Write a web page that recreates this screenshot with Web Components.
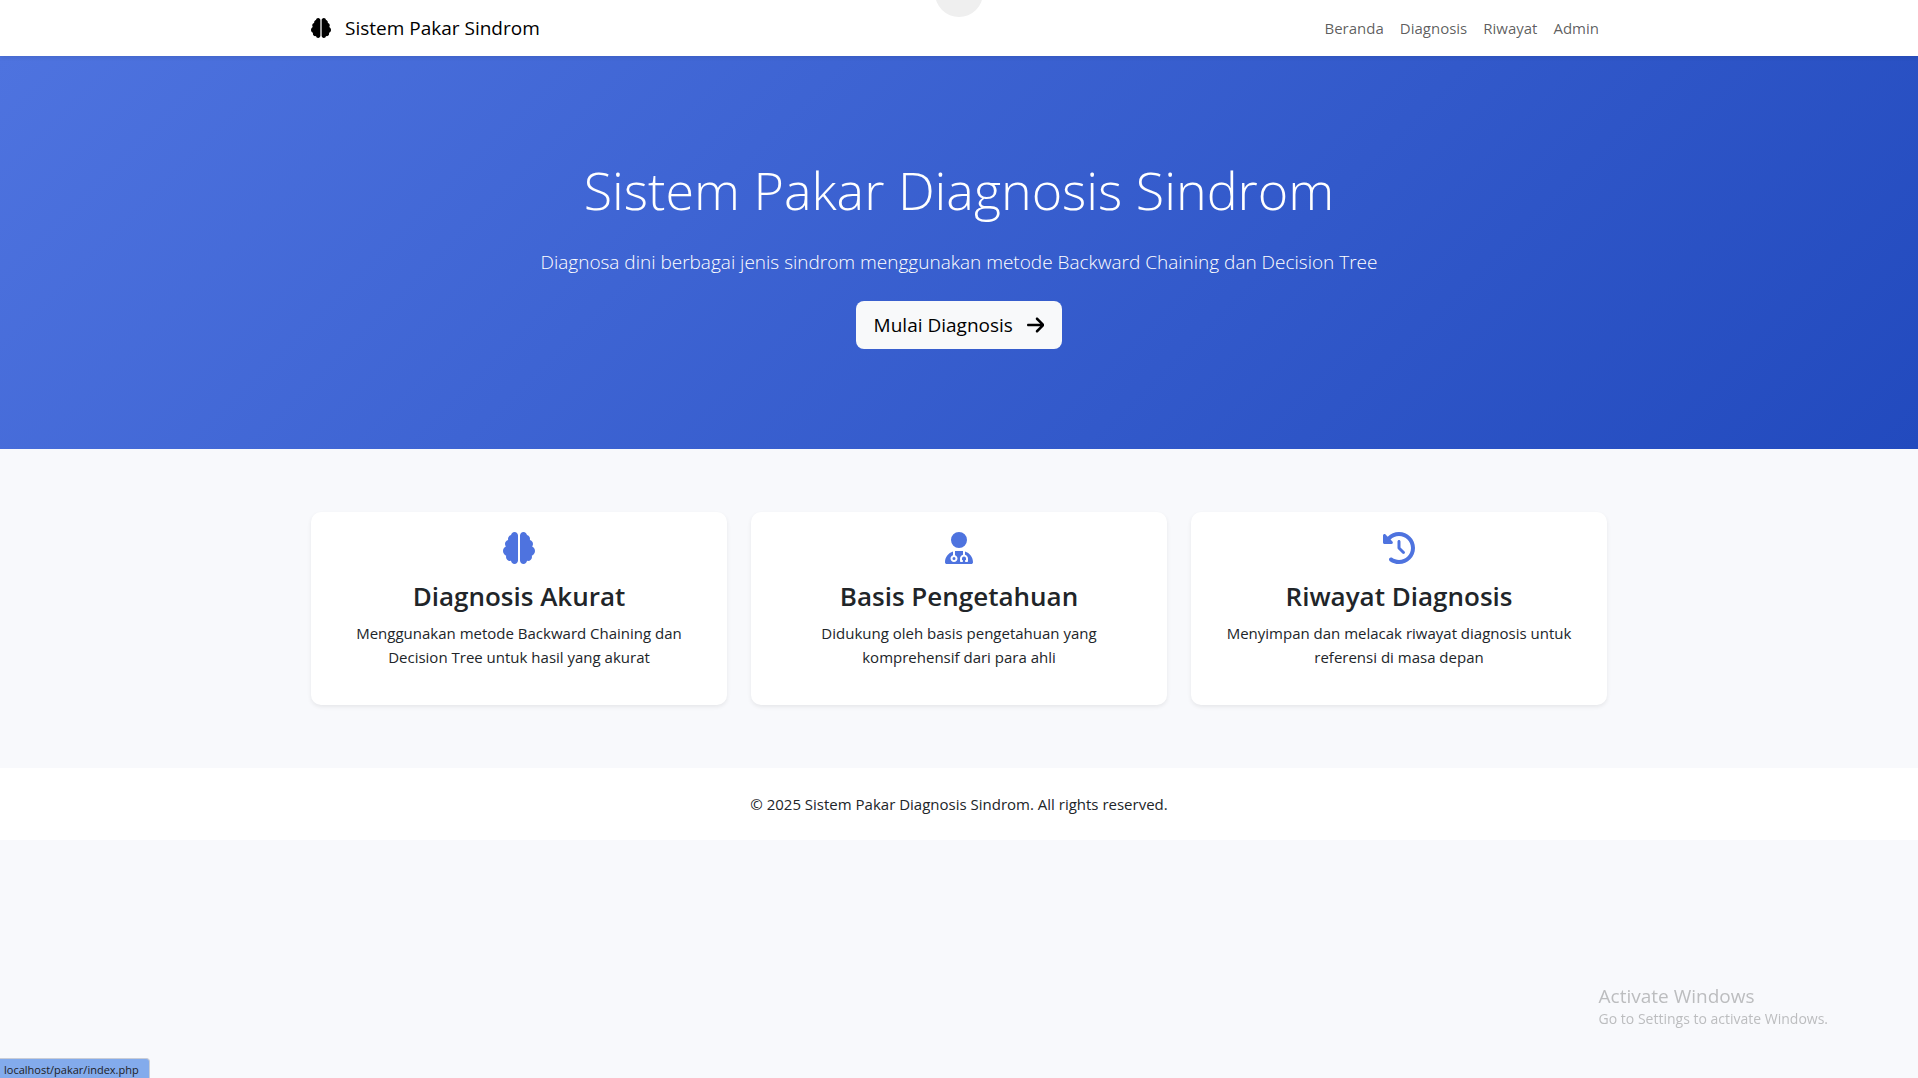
<!DOCTYPE html>
<html lang="id">
<head>
  <meta charset="UTF-8">
  <meta name="viewport" content="width=device-width, initial-scale=1.0">
  <title>Sistem Pakar Sindrom</title>
  <style>
    :root {
      --primary-color: #4e73df;
      --primary-dark: #224abe;
      --background-color: #f8f9fc;
      --text-color: #212529;
      --white: #fff;
      --container: 1296px;
    }
    body {
      margin: 0;
      min-height: 100vh;
      background: var(--background-color);
      color: var(--text-color);
      font: 400 15px/24px "Segoe UI", "Open Sans", "Noto Sans", sans-serif;
    }
  </style>
</head>
<body>
  <site-navbar>
    <app-icon slot="icon" name="brain"></app-icon>
    Sistem Pakar Sindrom
    <nav-link slot="links" href="#beranda">Beranda</nav-link>
    <nav-link slot="links" href="#diagnosis">Diagnosis</nav-link>
    <nav-link slot="links" href="#riwayat">Riwayat</nav-link>
    <nav-link slot="links" href="#admin">Admin</nav-link>
  </site-navbar>

  <main>
    <hero-section>
      <span slot="title">Sistem Pakar Diagnosis Sindrom</span>
      <span slot="lead">Diagnosa dini berbagai jenis sindrom menggunakan metode Backward Chaining dan Decision Tree</span>
      <span slot="action">Mulai Diagnosis</span>
    </hero-section>

    <feature-list>
      <feature-card icon="brain" title-text="Diagnosis Akurat">Menggunakan metode Backward Chaining dan Decision Tree untuk hasil yang akurat</feature-card>
      <feature-card icon="doctor" title-text="Basis Pengetahuan">Didukung oleh basis pengetahuan yang komprehensif dari para ahli</feature-card>
      <feature-card icon="history" title-text="Riwayat Diagnosis">Menyimpan dan melacak riwayat diagnosis untuk referensi di masa depan</feature-card>
    </feature-list>
  </main>

  <site-footer>&copy; 2025 Sistem Pakar Diagnosis Sindrom. All rights reserved.</site-footer>

  <top-handle></top-handle>
  <status-bubble>localhost/pakar/index.php</status-bubble>
  <system-notice>
    <span slot="title">Activate Windows</span>
    Go to Settings to activate Windows.
  </system-notice>

  <script>
    const ICONS = {
      brain: ["0 0 512 512", "M184 0c30.9 0 56 25.1 56 56l0 400c0 30.9-25.1 56-56 56c-28.9 0-52.7-21.9-55.7-50.1c-5.2 1.4-10.7 2.1-16.3 2.1c-35.3 0-64-28.7-64-64c0-7.4 1.3-14.6 3.6-21.2C21.4 367.4 0 338.2 0 304c0-31.9 18.7-59.5 45.8-72.3C37.1 220.8 32 207 32 192c0-30.7 21.6-56.3 50.4-62.6C80.8 123.9 80 118 80 112c0-29.9 20.6-55.1 48.3-62.1C131.3 21.9 155.1 0 184 0zM328 0c28.9 0 52.6 21.9 55.7 49.9c27.8 7 48.3 32.1 48.3 62.1c0 6-.8 11.9-2.4 17.4c28.8 6.2 50.4 31.9 50.4 62.6c0 15-5.1 28.8-13.8 39.7C493.3 244.5 512 272.1 512 304c0 34.2-21.4 63.4-51.6 74.8c2.3 6.6 3.6 13.8 3.6 21.2c0 35.3-28.7 64-64 64c-5.6 0-11.1-.7-16.3-2.1c-3 28.2-26.8 50.1-55.7 50.1c-30.9 0-56-25.1-56-56l0-400c0-30.9 25.1-56 56-56z"],
      doctor: ["0 0 448 512", "M224 256a128 128 0 1 0 0-256 128 128 0 1 0 0 256zm-96 55.2C54 332.9 0 401.3 0 482.3 0 498.7 13.3 512 29.7 512l388.6 0c16.4 0 29.7-13.3 29.7-29.7 0-81-54-149.4-128-171.1l0 50.8c27.6 7.1 48 32.2 48 62l0 40c0 8.8-7.2 16-16 16l-16 0c-8.8 0-16-7.2-16-16s7.2-16 16-16l0-24c0-17.7-14.3-32-32-32s-32 14.3-32 32l0 24c8.8 0 16 7.2 16 16s-7.2 16-16 16l-16 0c-8.8 0-16-7.2-16-16l0-40c0-29.8 20.4-54.9 48-62l0-57.1c-6-.6-12.1-.9-18.3-.9l-91.4 0c-6.2 0-12.3 .3-18.3 .9l0 65.4c23.1 6.9 40 28.3 40 53.7 0 30.9-25.1 56-56 56s-56-25.1-56-56c0-25.4 16.9-46.8 40-53.7l0-59.1zM144 448a24 24 0 1 0 0-48 24 24 0 1 0 0 48z"],
      history: ["0 0 512 512", "M75 75L41 41C25.9 25.9 0 36.6 0 57.9L0 168c0 13.3 10.7 24 24 24l110.1 0c21.4 0 32.1-25.9 17-41l-30.8-30.8C155 85.5 203 64 256 64c106 0 192 86 192 192s-86 192-192 192c-40.8 0-78.6-12.7-109.7-34.4c-14.5-10.1-34.4-6.6-44.6 7.9s-6.6 34.4 7.9 44.6C151.2 495 201.7 512 256 512c141.4 0 256-114.6 256-256S397.4 0 256 0C185.3 0 121.3 28.7 75 75zm181 53c-13.3 0-24 10.7-24 24l0 104c0 6.4 2.5 12.5 7 17l72 72c9.4 9.4 24.6 9.4 33.9 0s9.4-24.6 0-33.9l-65-65 0-94.1c0-13.3-10.7-24-24-24z"],
      arrow: ["0 0 448 512", "M438.6 278.6c12.5-12.5 12.5-32.8 0-45.3l-160-160c-12.5-12.5-32.8-12.5-45.3 0s-12.5 32.8 0 45.3L338.8 224 32 224c-17.7 0-32 14.3-32 32s14.3 32 32 32l306.7 0L233.4 393.4c-12.5 12.5-12.5 32.8 0 45.3s32.8 12.5 45.3 0l160-160z"]
    };

    class AppIcon extends HTMLElement {
      connectedCallback() {
        if (this.shadowRoot) return;
        this.attachShadow({ mode: "open" });
        const [viewBox, path] = ICONS[this.getAttribute("name")];
        this.shadowRoot.innerHTML = `
          <style>
            :host { display: inline-flex; height: var(--icon-size, 20px); }
            svg { height: 100%; fill: currentColor; }
          </style>
          <svg viewBox="${viewBox}" aria-hidden="true"><path d="${path}"/></svg>
        `;
      }
    }

    class NavLink extends HTMLElement {
      constructor() {
        super();
        this.attachShadow({ mode: "open" });
      }

      connectedCallback() {
        this.shadowRoot.innerHTML = `
          <style>
            :host { display: block; }
            a {
              display: block;
              padding: 8px;
              color: rgba(0, 0, 0, 0.65);
              text-decoration: none;
            }
            a:hover { color: #000; }
          </style>
          <a href="${this.getAttribute("href") || "#"}"><slot></slot></a>
        `;
      }
    }

    class SiteNavbar extends HTMLElement {
      constructor() {
        super();
        this.attachShadow({ mode: "open" });
        this.shadowRoot.innerHTML = `
          <style>
            :host {
              display: block;
              position: relative;
              z-index: 1;
              background: var(--white);
              box-shadow: 0 2px 4px rgba(0, 0, 0, 0.075);
            }
            nav {
              display: flex;
              justify-content: space-between;
              align-items: center;
              max-width: var(--container);
              margin: 0 auto;
              padding: 8px 12px;
            }
            .brand {
              display: flex;
              align-items: center;
              gap: 14px;
              color: #000;
              font-size: 19px;
              line-height: 30px;
              text-decoration: none;
            }
            .links { display: flex; }
          </style>
          <nav>
            <a class="brand" href="#"><slot name="icon"></slot><span><slot></slot></span></a>
            <div class="links"><slot name="links"></slot></div>
          </nav>
        `;
      }
    }

    class HeroSection extends HTMLElement {
      constructor() {
        super();
        this.attachShadow({ mode: "open" });
        this.shadowRoot.innerHTML = `
          <style>
            :host {
              display: block;
              padding: 100px 12px;
              background: linear-gradient(135deg, var(--primary-color) 0%, var(--primary-dark) 100%);
              color: var(--white);
              text-align: center;
            }
            h1 {
              margin: 0 0 24px;
              font-size: 52px;
              font-weight: 300;
              line-height: 67px;
            }
            p {
              margin: 0 0 24px;
              font-size: 19px;
              font-weight: 300;
              line-height: 30px;
            }
            button {
              display: inline-flex;
              align-items: center;
              gap: 14px;
              padding: 9px 18px;
              border: 0;
              border-radius: 8px;
              background: #f8f9fa;
              color: #000;
              font: inherit;
              font-size: 19px;
              line-height: 30px;
              vertical-align: top;
              cursor: pointer;
            }
          </style>
          <h1><slot name="title"></slot></h1>
          <p><slot name="lead"></slot></p>
          <button type="button"><slot name="action"></slot><app-icon name="arrow"></app-icon></button>
        `;
      }
    }

    class FeatureList extends HTMLElement {
      constructor() {
        super();
        this.attachShadow({ mode: "open" });
        this.shadowRoot.innerHTML = `
          <style>
            :host {
              display: block;
              max-width: var(--container);
              margin: 0 auto;
              padding: 63px 12px;
            }
            .grid {
              display: grid;
              grid-template-columns: repeat(auto-fit, minmax(300px, 1fr));
              gap: 24px;
            }
          </style>
          <div class="grid"><slot></slot></div>
        `;
      }
    }

    class FeatureCard extends HTMLElement {
      constructor() {
        super();
        this.attachShadow({ mode: "open" });
      }

      connectedCallback() {
        this.shadowRoot.innerHTML = `
          <style>
            :host {
              display: block;
              padding: 20px 32px;
              border-radius: 10px;
              background: var(--white);
              box-shadow: 0 2px 4px rgba(0, 0, 0, 0.075);
              text-align: center;
            }
            app-icon {
              --icon-size: 32px;
              display: flex;
              justify-content: center;
              margin-bottom: 16px;
              color: var(--primary-color);
            }
            h3 {
              margin: 0 0 8px;
              font-size: 26px;
              font-weight: 600;
              line-height: 33px;
            }
            p { margin: 0 0 16px; }
          </style>
          <app-icon name="${this.getAttribute("icon")}"></app-icon>
          <h3>${this.getAttribute("title-text")}</h3>
          <p><slot></slot></p>
        `;
      }
    }

    class SiteFooter extends HTMLElement {
      constructor() {
        super();
        this.attachShadow({ mode: "open" });
        this.shadowRoot.innerHTML = `
          <style>
            :host { display: block; }
            footer {
              padding: 24px 12px;
              background: var(--white);
              text-align: center;
            }
          </style>
          <footer><slot></slot></footer>
        `;
      }
    }

    // Round handle that peeks out from the top edge of the window
    class TopHandle extends HTMLElement {
      constructor() {
        super();
        this.attachShadow({ mode: "open" });
        this.shadowRoot.innerHTML = `
          <style>
            :host {
              position: fixed;
              top: 0;
              left: 0;
              right: 0;
              z-index: 2;
              display: flex;
              justify-content: center;
              pointer-events: none;
            }
            svg { display: block; }
          </style>
          <svg width="48" height="18" aria-hidden="true">
            <circle cx="24" cy="-7" r="24" fill="#efefef"/>
          </svg>
        `;
      }
    }

    class StatusBubble extends HTMLElement {
      constructor() {
        super();
        this.attachShadow({ mode: "open" });
        this.shadowRoot.innerHTML = `
          <style>
            :host {
              position: fixed;
              left: 0;
              bottom: 0;
              padding: 2px 10px 0 4px;
              border: 1px solid #c9cdd6;
              border-width: 1px 1px 0 0;
              border-radius: 0 4px 0 0;
              background: #83abec;
              color: #202124;
              font-size: 11px;
              line-height: 17px;
            }
          </style>
          <slot></slot>
        `;
      }
    }

    class SystemNotice extends HTMLElement {
      constructor() {
        super();
        this.attachShadow({ mode: "open" });
        this.shadowRoot.innerHTML = `
          <style>
            :host {
              position: fixed;
              right: 90px;
              bottom: 48px;
              color: #bcbdbf;
              font-size: 14px;
              line-height: 22px;
              pointer-events: none;
            }
            .title { font-size: 19px; line-height: 24px; }
          </style>
          <div class="title"><slot name="title"></slot></div>
          <slot></slot>
        `;
      }
    }

    customElements.define("app-icon", AppIcon);
    customElements.define("nav-link", NavLink);
    customElements.define("site-navbar", SiteNavbar);
    customElements.define("hero-section", HeroSection);
    customElements.define("feature-list", FeatureList);
    customElements.define("feature-card", FeatureCard);
    customElements.define("site-footer", SiteFooter);
    customElements.define("top-handle", TopHandle);
    customElements.define("status-bubble", StatusBubble);
    customElements.define("system-notice", SystemNotice);
  </script>
</body>
</html>
